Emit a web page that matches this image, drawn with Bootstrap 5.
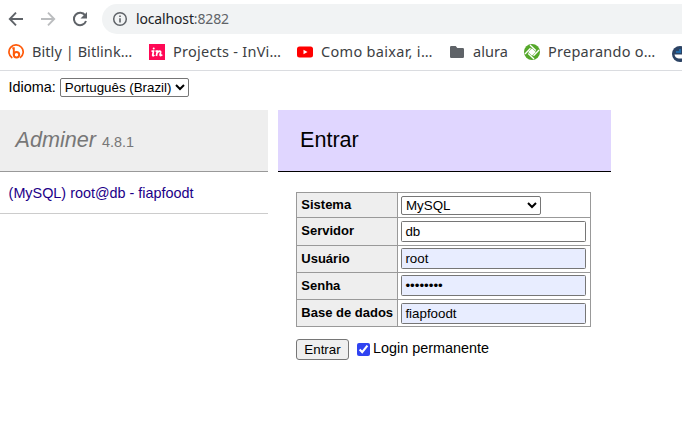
<!DOCTYPE html>
<html lang="pt-BR">
<head>
<meta charset="utf-8">
<title>Entrar - Adminer</title>
<link href="https://cdn.jsdelivr.net/npm/bootstrap@5.3.0/dist/css/bootstrap.min.css" rel="stylesheet">
<style>
body{font:14.4px/18px "Liberation Sans",Arial,sans-serif;color:#000;background:#fff;overflow:hidden;height:444px}
.browser{font-family:"Noto Sans","Open Sans",sans-serif;color:#3c4043;height:71px;border-bottom:1px solid #dadce0}
.toolbar{height:38px;padding-left:8px}
.toolbar>svg{margin-right:16px}
.address{height:30px;margin-left:14px;padding-left:10px;background:#f1f3f4;border-radius:15px 0 0 15px;font-size:14px;letter-spacing:-.15px}
.address b{font-weight:400;color:#202124}
.address span{color:#5f6368}
.bookmarks{height:28px;padding-left:8px;font-size:14.5px}
.bm{flex:none;white-space:nowrap}
.bm svg{flex:none;margin-right:8px}
.bm span{padding-bottom:2px}
.w1{width:141px;letter-spacing:.07px}.w2{width:148px;letter-spacing:.25px}.w3{width:152px;letter-spacing:.3px}.w4{width:75px;letter-spacing:.05px}.w5{width:148px;letter-spacing:.25px}
.language{height:39px;padding:7px 0 0 8.6px}
.native{appearance:auto;font:13.333px "Liberation Sans",Arial,sans-serif;color:#000;background:#fff;height:19px;padding:0;border:1px solid #767676;border-radius:2px}
.lang-select{width:129px;margin-left:4px}
.side{width:268px}
.heading{height:62px;font-size:21.6px;line-height:26px;padding-top:17px}
.brand{background:#eee;color:#777;border-bottom:1px solid #999;padding-left:15.6px}
.brand span{font-size:14.4px}
.login-link{height:42px;padding:12px 0 0 8.6px;border-bottom:1px solid #ccc}
.login-link a{color:#1c0088;text-decoration:none}
.main-pane{width:333px;margin-left:10px}
.main-title{background:#e0d6ff;border-bottom:1px solid #000;padding-left:22px;font-weight:400}
.main-form{padding:20px 0 0 18px}
.fields{width:295px;border:1px solid #999;font-size:13px}
.field{border-top:1px solid #999;height:27px}
.field:first-child{height:24px;border:0}
.field:first-child+.field{height:28px}
.field label{width:101px;background:#eee;border-right:1px solid #999;font-weight:700;line-height:15px;padding:5px 0 0 4.3px}
.field:first-child label{padding-top:4px}
.field .native{margin:3px 0 0 3px}
.field input.native{width:185px;height:21px;margin-top:2px;padding:1px 3.4px;appearance:none;outline:0;border-radius:1.5px}
.field:nth-child(2) input.native,.field:last-child input.native{margin-top:3px}
.field .filled{background:#e8edff}
.system-select{width:140px}
.actions{padding-top:12px}
.actions label{margin-top:-3px}
.submit{width:53px;height:21px;background:#efefef;border-radius:3px}
.permanent{width:13px;height:13px;margin:0 3px 0 8px;accent-color:#3043f1}
</style>
</head>
<body>
<header class="browser overflow-hidden">
 <div class="toolbar d-flex align-items-center">
  <svg width="16" height="16" viewBox="0 0 16 16" fill="none" stroke="#5f6368" stroke-width="1.9"><path d="M15 8H2M8 1.7 1.8 8 8 14.3"/></svg>
  <svg width="16" height="16" viewBox="0 0 16 16" fill="none" stroke="#bbbdbf" stroke-width="1.9"><path d="M1 8h13M8 1.7 14.2 8 8 14.3"/></svg>
  <svg class="me-0" width="16" height="16" viewBox="0 0 16 16"><path d="M13.2 4.4A6.2 6.2 0 1 0 14 10" fill="none" stroke="#5f6368" stroke-width="2"/><path d="M15 1v6.5H8.5z" fill="#5f6368"/></svg>
  <div class="address flex-grow-1 d-flex align-items-center">
   <svg width="16" height="16" viewBox="0 0 16 16"><circle cx="8" cy="8" r="6.3" fill="none" stroke="#5f6368" stroke-width="1.5"/><path d="M7.2 7.200h1.600V11.500H7.200zM7.200 4.500h1.600v1.600H7.200z" fill="#5f6368"/></svg>
   <div class="ms-2"><b>localhost</b><span>:8282</span></div>
  </div>
 </div>
 <nav class="bookmarks d-flex align-items-center">
  <div class="bm w1 d-flex align-items-center"><svg width="16" height="16" viewBox="0 0 16 16" fill="none" stroke="#ff5a0a"><path d="M4.300 14A7.100 7.100 0 1 1 12 13.900" stroke-width="1.700"/><path d="M4.300 4.300h1.500v6.500" stroke-width="1.900"/><circle cx="8.500" cy="10.800" r="2.700" stroke-width="2"/></svg><span>Bitly | Bitlink…</span></div>
  <div class="bm w2 d-flex align-items-center"><svg width="16" height="16" viewBox="0 0 16 16"><path fill="#ff0855" d="M0 0h16v16H0z"/><path d="M2.500 7.200h2L3.700 11c-.2 1 .9 1 1.700.2M6.500 7.200h1.800L7.400 12M8 9.200C9.400 6.600 12 6.600 11.600 8.500l-.5 2c-.3 1.400 1 1.300 2.200.2" fill="none" stroke="#fff" stroke-width="1.700"/><circle cx="4.700" cy="4.600" r="1" fill="#fff"/></svg><span>Projects - InVi…</span></div>
  <div class="bm w3 d-flex align-items-center"><svg width="16" height="16" viewBox="0 0 16 16"><rect y="2.500" width="16" height="11" rx="2.500" fill="red"/><path d="m6.500 5.700 4 2.300-4 2.300z" fill="#fff"/></svg><span>Como baixar, i…</span></div>
  <div class="bm w4 d-flex align-items-center"><svg width="16" height="16" viewBox="0 0 16 16"><path d="M2.200 2h4.500l1.600 2h5.500q1.200 0 1.200 1.200v7.600q0 1.200-1.200 1.200H2.200Q1 14 1 12.800V3.200Q1 2 2.200 2z" fill="#5f6368"/></svg><span>alura</span></div>
  <div class="bm w5 d-flex align-items-center"><svg width="16" height="16" viewBox="0 0 16 16"><circle cx="8" cy="8" r="8" fill="#55a82a"/><path d="M8 4.200 11.800 8 8 11.800 4.200 8z" fill="#fff"/><path d="M6 1 11.800 6.500M15 6 9.500 11.800M10 15 4.200 9.500M1 10 6.500 4.200" stroke="#fff" stroke-width="1.300"/></svg><span>Preparando o…</span></div>
  <div class="bm"><svg width="16" height="16" viewBox="0 0 16 16"><circle cx="8" cy="8" r="8" fill="#2c4364"/><path d="M2.500 8.500h13q-1 4-6 4H6.500Q3 12 2.500 8.500" fill="#fff"/><path d="M4 5h5v2H4zM7 3h2v2H7z" fill="#216aa8"/></svg></div>
 </nav>
</header>
<div class="language d-flex align-items-start"><label for="lang">Idioma:</label><select id="lang" class="native lang-select"><option>Português (Brazil)</option></select></div>
<div class="d-flex align-items-start">
 <aside class="side">
  <div class="heading brand"><i>Adminer</i> <span>4.8.1</span></div>
  <div class="login-link"><a href="#login">(MySQL) root@db - fiapfoodt</a></div>
 </aside>
 <main class="main-pane">
  <h2 class="heading main-title mb-0">Entrar</h2>
  <form id="login" class="main-form">
   <div class="fields">
    <div class="field d-flex"><label for="sys">Sistema</label><select id="sys" class="native system-select"><option>MySQL</option></select></div>
    <div class="field d-flex"><label for="srv">Servidor</label><input id="srv" class="native" value="db"></div>
    <div class="field d-flex"><label for="usr">Usuário</label><input id="usr" class="native filled" value="root"></div>
    <div class="field d-flex"><label for="pwd">Senha</label><input id="pwd" type="password" class="native filled" value="password"></div>
    <div class="field d-flex"><label for="base">Base de dados</label><input id="base" class="native filled" value="fiapfoodt"></div>
   </div>
   <div class="actions d-flex align-items-center"><button type="button" class="native submit">Entrar</button><input id="perm" type="checkbox" class="permanent" checked><label for="perm">Login permanente</label></div>
  </form>
 </main>
</div>
<script src="https://cdn.jsdelivr.net/npm/bootstrap@5.3.0/dist/js/bootstrap.bundle.min.js"></script>
</body>
</html>
